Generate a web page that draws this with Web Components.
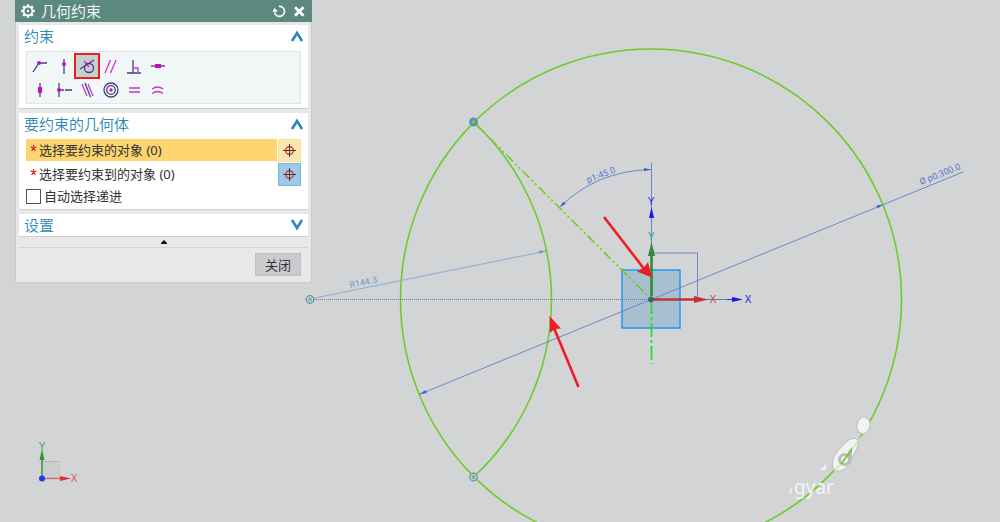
<!DOCTYPE html>
<html lang="zh-CN">
<head>
<meta charset="UTF-8">
<meta name="viewport" content="width=device-width, initial-scale=1">
<title>几何约束</title>
<style>
    html, body {
        height: 100%;
        margin: 0;
    }

    body {
        position: relative;
        overflow: hidden;
        background: #d3d4d6;
        color: #333;
        font: 13px/18px "Noto Sans", "Noto Sans CJK SC", sans-serif;
    }

    sketch-canvas {
        height: 100%;
    }

    /* floating window over the sketch */
    dialog-window {
        position: absolute;
        top: 0;
        left: 15px;
        width: 297px;
    }
</style>
</head>
<body>
    <sketch-canvas></sketch-canvas>

    <dialog-window title="几何约束">
        <group-box title="约束" open>
            <constraint-palette selected="相切"></constraint-palette>
        </group-box>
        <group-box title="要约束的几何体" open>
            <select-row active>选择要约束的对象 (0)</select-row>
            <select-row>选择要约束到的对象 (0)</select-row>
            <check-row>自动选择递进</check-row>
        </group-box>
        <group-box title="设置"></group-box>
        <push-button slot="footer">关闭</push-button>
    </dialog-window>

<script>
class DialogWindow extends HTMLElement {
    constructor() {
        super();
        this.attachShadow({ mode: "open" });
        this.render();
    }

    render() {
        this.shadowRoot.innerHTML = `
        <style>
            :host {
                display: block;
                box-sizing: border-box;
                background: #e8e8e8;
                border: 1px solid #c8c9ca;
                border-top: 0;
            }

            header {
                display: flex;
                align-items: center;
                gap: 6px;
                height: 22px;
                padding: 0 6px;
                margin: 0 -1px;
                background: #5b887f;
                color: #fff;
            }

            h1 {
                flex: 1;
                margin: 0;
                font-size: 15px;
                line-height: 22px;
                font-weight: 350;
            }

            button {
                display: flex;
                padding: 0;
                border: 0;
                background: none;
                color: inherit;
            }

            svg {
                display: block;
            }

            .body {
                display: flex;
                flex-direction: column;
                gap: 4px;
                padding: 3px 3px 0;
            }

            .fold {
                display: flex;
                justify-content: center;
                align-items: center;
                width: calc(100% - 6px);
                height: 11px;
                margin: 0 3px;
                border-bottom: 1px solid #d4d4d4;
            }

            footer {
                display: flex;
                justify-content: flex-end;
                padding: 5px 10px 6px;
            }
        </style>
        <header>
            <svg width="14" height="14" viewBox="0 0 14 14" fill="none" stroke="#fff">
                <circle cx="7" cy="7" r="4.4" stroke-width="1.8"/>
                <circle cx="7" cy="7" r="1.2" fill="#fff" stroke="none"/>
                <path stroke-width="2.4" d="M7 .3v2M7 11.7v2M.3 7h2M11.700 7h2M2.200 2.200l1.400 1.400M10.400 10.400l1.400 1.400M2.200 11.800l1.400-1.400M10.400 3.600l1.400-1.400"/>
            </svg>
            <h1>${this.getAttribute("title")}</h1>
            <button type="button" aria-label="重置">
                <svg width="14" height="14" viewBox="0 0 14 14" fill="none" stroke="#fff" stroke-width="1.7">
                    <path d="M7 2.400A5 5 0 1 1 2.600 8.500"/>
                    <path d="M.500 8L2.300 4 6 7.500z" fill="#fff" stroke="none"/>
                </svg>
            </button>
            <button type="button" aria-label="关闭窗口">
                <svg width="14" height="14" viewBox="0 0 14 14" stroke="#fff" stroke-width="2.800">
                    <path d="M3 3.200l8.500 8.500M11.500 3.200l-8.500 8.500"/>
                </svg>
            </button>
        </header>
        <div class="body"><slot></slot></div>
        <button type="button" class="fold" aria-label="折叠">
            <svg width="6" height="4" viewBox="0 0 6 4"><path d="M0 4V3l3-3 3 3v1z" fill="#111"/></svg>
        </button>
        <footer><slot name="footer"></slot></footer>
        `;
    }
}

class GroupBox extends HTMLElement {
    constructor() {
        super();
        this.attachShadow({ mode: "open" });
        this.render();
    }

    render() {
        const open = this.hasAttribute("open");
        this.shadowRoot.innerHTML = `
        <style>
            :host {
                display: block;
                background: #fff;
                border-bottom: 1px solid #cfd0d1;
            }

            .head {
                display: flex;
                justify-content: space-between;
                align-items: center;
                width: 100%;
                height: 22px;
                padding: 0 4px 0 5px;
                border: 0;
                background: none;
                color: #2c88b8;
                font: inherit;
                font-size: 15px;
                line-height: 22px;
                font-weight: 350;
            }

            .content {
                display: flex;
                flex-direction: column;
                padding: 4px 7px;
            }
        </style>
        <button type="button" class="head" aria-expanded="${open}">
            <span>${this.getAttribute("title")}</span>
            <svg width="14" height="12" viewBox="0 0 14 12" fill="none" stroke="#2c88b8" stroke-width="2.600">
                <path d="${open ? "M2 11L7 3l5 8" : "M2 1l5 8 5-8"}"/>
            </svg>
        </button>
        ${open ? `<div class="content"><slot></slot></div>` : ""}
        `;
    }
}

// a = dark line, b = magenta line, c = magenta fill
const CONSTRAINTS = [
    ["重合", `<path class="a" d="M3 16L9 7H17"/><circle class="c" cx="9" cy="7" r="2"/>`],
    ["点在曲线上", `<path class="a" d="M10 3V18"/><circle class="c" cx="10" cy="8" r="2"/>`],
    ["相切", `<circle class="a" cx="12" cy="12" r="4.5"/><path class="a" d="M3 13L17 4"/><path class="b" d="M7 5l5 6"/><circle class="c" cx="10" cy="8" r="1.4"/>`],
    ["平行", `<path class="b" d="M4 17L9.5 4M9.5 17L15 4"/>`],
    ["垂直", `<path class="a" d="M9 4V17M3 17H17"/><path class="b" d="M9 12h5v5"/>`],
    ["水平", `<path class="a" d="M3 10H17"/><path class="c" d="M7 8h6v4H7z"/>`],
    ["竖直", `<path class="a" d="M10 3V17"/><path class="c" d="M8 7h4v6H8z"/>`],
    ["中点", `<path class="a" d="M5 3V17M5 10h5M11 10h7"/><circle class="c" cx="5" cy="10" r="2"/>`],
    ["共线", `<path class="b" d="M5 4l5 12M11 4l5 12"/><path class="a" d="M8 3l5.500 14"/>`],
    ["同心", `<circle class="a" cx="10" cy="10" r="7"/><circle class="a" cx="10" cy="10" r="4.3"/><circle class="c" cx="10" cy="10" r="1.7"/>`],
    ["等长", `<path class="b" d="M5 8h11M5 12h11"/>`],
    ["等半径", `<path class="b" d="M4 9q5.500-4 11 0M4 13.500q5.500-4 11 0"/>`]
];

class ConstraintPalette extends HTMLElement {
    constructor() {
        super();
        this.attachShadow({ mode: "open" });
        this.render();
    }

    render() {
        const selected = this.getAttribute("selected");
        const buttons = CONSTRAINTS.map(([name, shape]) => `
            <button type="button" aria-label="${name}" aria-pressed="${name === selected}">
                <svg width="20" height="20" viewBox="0 0 20 20">${shape}</svg>
            </button>`).join("");

        this.shadowRoot.innerHTML = `
        <style>
            :host {
                display: block;
                padding: 2px 2px 1px;
                background: #f1f6f6;
                border: 1px solid #dfe5e5;
            }

            .grid {
                display: grid;
                grid-template-columns: repeat(6, 22px);
                justify-content: space-between;
                width: 140px;
            }

            button {
                display: grid;
                place-items: center;
                box-sizing: border-box;
                height: 24px;
                padding: 0;
                border: 0;
                background: none;
            }

            button[aria-pressed="true"] {
                margin: 0 -1px;
                background: #c3d0d2;
                border: 1px dotted #6d7a80;
                outline: 2px solid #ec1c24;
                outline-offset: -1px;
            }

            .a {
                fill: none;
                stroke: #44407e;
                stroke-width: 1.3;
            }

            .b {
                fill: none;
                stroke: #c03bc8;
                stroke-width: 1.3;
            }

            .c {
                fill: #c40fc9;
            }
        </style>
        <div class="grid">${buttons}</div>
        `;
    }
}

class SelectRow extends HTMLElement {
    constructor() {
        super();
        this.attachShadow({ mode: "open" });
        this.render();
    }

    render() {
        this.shadowRoot.innerHTML = `
        <style>
            :host {
                display: flex;
                gap: 1px;
                height: 24px;
                color: #333;
            }

            .label {
                flex: 1;
                display: flex;
                align-items: center;
                gap: 2px;
                height: 22px;
                padding-left: 4px;
            }

            .star {
                width: 7px;
                height: 14px;
            }

            button {
                display: grid;
                place-items: center;
                box-sizing: border-box;
                width: 23px;
                height: 23px;
                padding: 0;
                background: #9ccbe5;
                border: 1px solid #7fb5d3;
            }

            :host([active]) .label {
                background: #fcd56f;
            }

            :host([active]) button {
                background: #f9e9ae;
                border-color: #fbe08f;
            }
        </style>
        <span class="label">
            <svg class="star" viewBox="0 0 7 14" stroke="#d22" stroke-width="1.200"><path d="M3.500 2v3M3.500 5L.5 4M3.500 5l3-1M3.500 5L1.600 8M3.500 5l1.900 3"/></svg>
            <slot></slot>
        </span>
        <button type="button" aria-label="选择对象">
            <svg width="15" height="15" viewBox="0 0 15 15" fill="none">
                <circle cx="7.500" cy="7.500" r="3.800" stroke="#d4343c" stroke-width="1.400"/>
                <path d="M7.500 1v13M1 7.500h13" stroke="#4a3434"/>
            </svg>
        </button>
        `;
    }
}

class CheckRow extends HTMLElement {
    constructor() {
        super();
        this.attachShadow({ mode: "open" });
        this.render();
    }

    render() {
        this.shadowRoot.innerHTML = `
        <style>
            :host {
                display: block;
            }

            label {
                display: flex;
                align-items: center;
                gap: 3px;
                height: 18px;
            }

            input {
                appearance: none;
                box-sizing: border-box;
                width: 15px;
                height: 15px;
                margin: 0;
                background: #fff;
                border: 1px solid #555;
            }
        </style>
        <label><input type="checkbox"><slot></slot></label>
        `;
    }
}

class PushButton extends HTMLElement {
    constructor() {
        super();
        this.attachShadow({ mode: "open" });
        this.render();
    }

    render() {
        this.shadowRoot.innerHTML = `
        <style>
            :host {
                display: block;
            }

            button {
                display: block;
                box-sizing: border-box;
                min-width: 46px;
                height: 23px;
                padding: 0 8px;
                background: #cacbce;
                border: 1px solid #bfc0c3;
                color: #333;
                font: inherit;
            }
        </style>
        <button type="button"><slot></slot></button>
        `;
    }
}

class SketchCanvas extends HTMLElement {
    constructor() {
        super();
        this.attachShadow({ mode: "open" });
        this.render();
    }

    render() {
        this.shadowRoot.innerHTML = `
        <style>
            :host {
                display: block;
            }

            svg {
                display: block;
                width: 100%;
                height: 100%;
                fill: none;
            }

            .curve {
                stroke: #6fcb27;
                stroke-width: 1.6;
            }

            .dim {
                stroke: #6b86cf;
            }

            .dim-fill {
                fill: #3b66c8;
            }

            .dim-text {
                fill: #5577c8;
                font: 9px "Roboto", sans-serif;
            }

            .axis {
                font: 10px "Liberation Sans", sans-serif;
                text-anchor: middle;
            }

            .mark {
                fill: #f4f4f4;
                font: 19px "Noto Sans", sans-serif;
            }
        </style>
        <svg>
            <!-- datum plane -->
            <rect x="622" y="270" width="58" height="58" fill="#a8bfd0" stroke="#1e9bf5" stroke-width="1.500"/>
            <path d="M651.500 253H697.500V299" stroke="#7f7fd8"/>

            <!-- sketch curves -->
            <circle class="curve" cx="651" cy="299.500" r="250.500"/>
            <path class="curve" d="M473.500 122A241 241 0 0 1 473.500 477"/>
            <path class="curve" d="M473.500 122L651 299" stroke-dasharray="10 3 2 3 2 3"/>
            <path d="M651.500 300V364" stroke="#22e02e" stroke-width="1.800" stroke-dasharray="14 3 3 3"/>

            <!-- dimensions -->
            <path d="M310 299.500H651" stroke="#5f79b8" stroke-dasharray="1 1"/>
            <path class="dim" d="M419 394.500L963 172"/>
            <path class="dim-fill" d="M419 394.500l6.500-4.500 1.200 3zM883 204.500l-6.500 1 1.100 3z"/>
            <path d="M310 299L546 251" stroke="#8aabd6"/>
            <path d="M546 251l-7-.4.700 3.200z" fill="#6d9bd0"/>
            <path class="dim" d="M651.500 163V299"/>
            <path class="dim" d="M560 207Q596 171 651 169.500"/>
            <path class="dim-fill" d="M560 207l3.200-5.500 2.500 2.500zM651 169.500l-7-1.500v3.200z"/>
            <text class="dim-text" transform="translate(588 183) rotate(-21)">p1:45.0</text>
            <text class="dim-text" transform="translate(921 185) rotate(-22)">Ø p0:300.0</text>
            <text class="dim-text" transform="translate(350 288) rotate(-11)" style="fill: #6d9bd0">R144.3</text>

            <!-- end points -->
            <g stroke="#5f88cc" stroke-width="1.200" fill="#6fcb27">
                <circle cx="310" cy="299.500" r="3.800" fill="#c3d2e2"/>
                <circle cx="310" cy="299.500" r="1.900" stroke="none"/>
                <circle cx="473.500" cy="477" r="3.800" fill="#b7cbe4"/>
                <circle cx="473.500" cy="477" r="1.900" stroke="none"/>
                <circle cx="473.500" cy="122" r="3.800" fill="#5f88cc"/>
                <circle cx="473.500" cy="122" r="2" stroke="none"/>
            </g>

            <!-- coordinate system -->
            <path d="M705 299.500H735" stroke="#25a08e"/>
            <path d="M727 299.500H735" stroke="#2828e0"/>
            <path d="M743 299.500l-11-2.500v5zM651.500 207l-2.500 11h5z" fill="#1717e6"/>
            <path d="M651.500 296V252" stroke="#2f8c37" stroke-width="2.600"/>
            <path d="M651.500 242l-3.500 14h7z" fill="#2f8c37"/>
            <path d="M652 299.500H697" stroke="#c82f36" stroke-width="2.600"/>
            <path d="M708 299.500l-14-3.500v7z" fill="#c82f36"/>
            <circle cx="651" cy="299.500" r="2.500" fill="#476b3d" stroke="#2f5ca8"/>
            <text class="axis" x="651" y="205" fill="#2323e0">Y</text>
            <text class="axis" x="651" y="240" fill="#1fa797">Y</text>
            <text class="axis" x="713" y="303" fill="#c8474c">X</text>
            <text class="axis" x="748" y="303" fill="#2323e0">X</text>

            <!-- callout arrows -->
            <g fill="#ee1c24" stroke="#ee1c24" stroke-width="2.600">
                <path d="M604 217L645 270M578.500 387L554 328"/>
                <path stroke="none" d="M652 277.500L637 271.500 643.500 268 648 262zM549.500 316L550 333 554.500 329 561 328.500z"/>
            </g>

            <!-- view triad -->
            <path d="M42.500 461.500h16.500v17" stroke="#b6b7b9"/>
            <path d="M43 462h15.500v16H43z" fill="#cccdcf"/>
            <path d="M42 478V458" stroke="#35913f" stroke-width="1.500"/>
            <path d="M42 449l-2.500 11h5z" fill="#2f9a3a"/>
            <path d="M44 478.500H62" stroke="#c96266" stroke-width="1.300"/>
            <path d="M71 478.500l-11-2.500v5z" fill="#df2e34"/>
            <circle cx="42" cy="478.500" r="3" fill="#1d3fe0"/>
            <text class="axis" x="42" y="450" fill="#44a04c">Y</text>
            <text class="axis" x="74" y="482" fill="#df5055">X</text>

            <!-- watermark -->
            <g fill="#f2f2f2" stroke="#bcbdbf">
                <ellipse cx="863.500" cy="425.500" rx="6.500" ry="8.500" transform="rotate(12 863.500 425.500)"/>
                <path d="M845 443Q852 436 858 439.500 859 443 857 448L850 463Q844 472 837 471 830.500 469 833 459 835 453 845 443z"/>
            </g>
            <path d="M820 470l6-6v6z" fill="#f2f2f2"/>
            <circle cx="844.500" cy="459.500" r="5" stroke="#b9bbbd" stroke-width="3"/>
            <path d="M848.500 464V451l3.500-4v12z" fill="#b9bbbd"/>
            <path d="M841 464l11-15" stroke="#6fcb27" stroke-width="1.700"/>
            <path d="M834 471l7-7M852 449l9-12" stroke="#c4e9a8" stroke-width="1.300"/>
            <path d="M790 488l1.500-1v7h-1.500z" fill="#f4f4f4"/>
            <text class="mark" x="794" y="494">gyar</text>
        </svg>
        `;
    }
}

customElements.define("sketch-canvas", SketchCanvas);
customElements.define("dialog-window", DialogWindow);
customElements.define("group-box", GroupBox);
customElements.define("constraint-palette", ConstraintPalette);
customElements.define("select-row", SelectRow);
customElements.define("check-row", CheckRow);
customElements.define("push-button", PushButton);
</script>
</body>
</html>
